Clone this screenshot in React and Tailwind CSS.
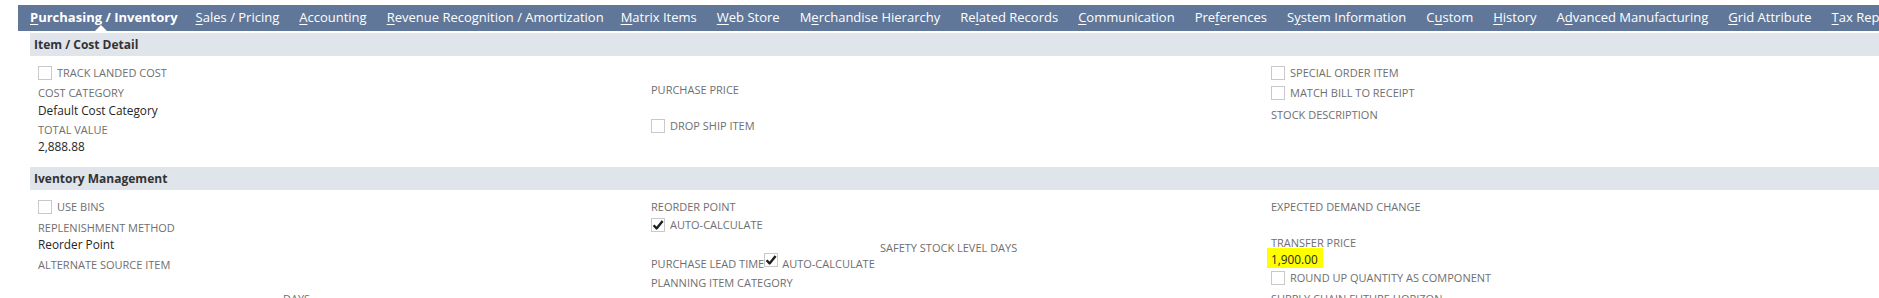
import React from "react";

const tabs = [
  ["Purchasing / Inventory", 0, "shrink-0 pl-[10px] pr-[8px] font-bold"],
  ["Sales / Pricing", 0, "shrink-0 px-[10px]"],
  ["Accounting", 0, "shrink-0 px-[10px]"],
  ["Revenue Recognition / Amortization", 0, "shrink-0 pl-[10px] pr-[7px]"],
  ["Matrix Items", 0, "shrink-0 px-[10px]"],
  ["Web Store", 0, "shrink-0 px-[10px]"],
  ["Merchandise Hierarchy", 1, "shrink-0 px-[10px]"],
  ["Related Records", 2, "shrink-0 px-[10px]"],
  ["Communication", 0, "shrink-0 px-[10px]"],
  ["Preferences", 3, "shrink-0 px-[10px]"],
  ["System Information", 1, "shrink-0 px-[10px]"],
  ["Custom", 1, "shrink-0 px-[10px]"],
  ["History", 0, "shrink-0 px-[10px]"],
  ["Advanced Manufacturing", 1, "shrink-0 px-[10px]"],
  ["Grid Attribute", 0, "shrink-0 px-[10px]"],
  ["Tax Reporting", 0, "shrink-0 px-[10px]"],
];

function Tab({ label, u, cls }) {
  return (
    <span className={cls}>
      {label.slice(0, u)}
      <span className="underline underline-offset-2">{label[u]}</span>
      {label.slice(u + 1)}
    </span>
  );
}

function Box({ checked }) {
  return (
    <span className="inline-flex h-[14px] w-[14px] shrink-0 items-center justify-center border border-[#c9c9c9] bg-white">
      {checked && (
        <svg width="12" height="12" viewBox="0 0 12 12">
          <path d="M1.6 6.2 L4.6 9.4 L10.6 2" fill="none" stroke="#1f1f1f" strokeWidth="2.4" strokeLinejoin="round" />
        </svg>
      )}
    </span>
  );
}

function CheckRow({ label, checked, className = "" }) {
  return (
    <div className={"flex h-[16px] items-center gap-[5px] " + className}>
      <Box checked={checked} />
      <span className="text-[11px] leading-[16px] text-[#6f6f6f]">{label}</span>
    </div>
  );
}

function Label({ children, className = "" }) {
  return <div className={"h-[16px] text-[11px] leading-[16px] text-[#6f6f6f] whitespace-nowrap " + className}>{children}</div>;
}

function Value({ children, className = "" }) {
  return <div className={"h-[16px] text-[11.8px] leading-[16px] text-[#262626] whitespace-nowrap " + className}>{children}</div>;
}

function Header({ children }) {
  return (
    <div className="flex h-[23px] items-center bg-[#e0e4eb] pl-[4px] text-[12px] font-bold text-[#333333]">
      {children}
    </div>
  );
}

export default function App() {
  return (
    <div className="h-[298px] w-[1879px] overflow-hidden bg-white font-['Open_Sans',sans-serif]">
      <div className="pl-[18px] pt-[5px]">
        <div className="relative flex h-[26px] items-center overflow-hidden whitespace-nowrap bg-[#607799] pl-[2px] text-[13px] text-white">
          {tabs.map(([l, u, c]) => (
            <Tab key={l} label={l} u={u} cls={c} />
          ))}
          <div className="absolute bottom-0 left-[77px] h-0 w-0 border-x-[6px] border-b-[6px] border-x-transparent border-b-white" />
        </div>
      </div>

      <div className="pl-[30px] pt-[2px]">
        <Header>Item / Cost Detail</Header>
        <div className="flex h-[111px] pl-[8px]">
          <div className="w-[613px] shrink-0">
            <CheckRow label="TRACK LANDED COST" className="mt-[9px]" />
            <Label className="mt-[4px]">COST CATEGORY</Label>
            <Value className="mt-[1px]">Default Cost Category</Value>
            <Label className="mt-[4px]">TOTAL VALUE</Label>
            <Value>2,888.88</Value>
          </div>
          <div className="w-[620px] shrink-0">
            <Label className="mt-[26px]">PURCHASE PRICE</Label>
            <CheckRow label="DROP SHIP ITEM" className="mt-[20px]" />
          </div>
          <div className="flex-1">
            <CheckRow label="SPECIAL ORDER ITEM" className="mt-[9px]" />
            <CheckRow label="MATCH BILL TO RECEIPT" className="mt-[4px]" />
            <Label className="mt-[6px]">STOCK DESCRIPTION</Label>
          </div>
        </div>

        <Header>Iventory Management</Header>
        <div className="flex pl-[8px]">
          <div className="w-[613px] shrink-0">
            <CheckRow label="USE BINS" className="mt-[9px]" />
            <Label className="mt-[5px]">REPLENISHMENT METHOD</Label>
            <Value>Reorder Point</Value>
            <Label className="mt-[5px]">ALTERNATE SOURCE ITEM</Label>
            <Label className="mt-[18px] pl-[245px]">DAYS</Label>
          </div>
          <div className="w-[620px] shrink-0">
            <Label className="mt-[9px]">REORDER POINT</Label>
            <CheckRow label="AUTO-CALCULATE" checked className="mt-[2px]" />
            <div className="mt-[8px] h-[14px] pl-[229px] text-[11px] leading-[14px] text-[#6f6f6f]">SAFETY STOCK LEVEL DAYS</div>
            <div className="flex h-[16px] items-end text-[11px] leading-[14px] text-[#6f6f6f]">
              <span>PURCHASE LEAD TIME</span>
              <span className="mb-[2px]">
                <Box checked />
              </span>
              <span className="ml-[4px]">AUTO-CALCULATE</span>
            </div>
            <Label className="mt-[4px]">PLANNING ITEM CATEGORY</Label>
          </div>
          <div className="flex-1">
            <Label className="mt-[9px]">EXPECTED DEMAND CHANGE</Label>
            <Label className="mt-[20px]">TRANSFER PRICE</Label>
            <Value>
              <span className="-ml-[4px] -mt-[4px] inline-block bg-[#ffff00] pb-[2px] pl-[4px] pr-[5px] pt-[4px] leading-[14px]">1,900.00</span>
            </Value>
            <CheckRow label="ROUND UP QUANTITY AS COMPONENT" className="mt-[3px]" />
            <Label className="mt-[5px]">SUPPLY CHAIN FUTURE HORIZON</Label>
          </div>
        </div>
      </div>
    </div>
  );
}
